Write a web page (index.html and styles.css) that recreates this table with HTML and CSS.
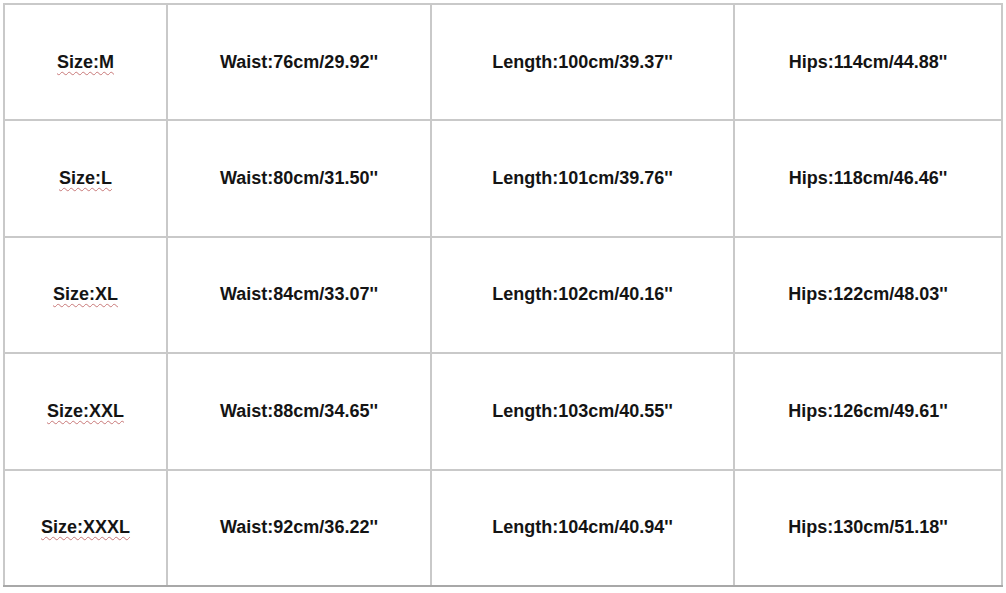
FILE: index.html
```html
<!DOCTYPE html>
<html>
<head>
<meta charset="utf-8">
<link rel="stylesheet" href="styles.css">
</head>
<body>
<table class="sizes">
  <colgroup>
    <col class="c1"><col class="c2"><col class="c3"><col class="c4">
  </colgroup>
  <tr>
    <td><span class="sz">Size:M</span></td>
    <td>Waist:76cm/29.92''</td>
    <td>Length:100cm/39.37''</td>
    <td>Hips:114cm/44.88''</td>
  </tr>
  <tr>
    <td><span class="sz">Size:L</span></td>
    <td>Waist:80cm/31.50''</td>
    <td>Length:101cm/39.76''</td>
    <td>Hips:118cm/46.46''</td>
  </tr>
  <tr>
    <td><span class="sz">Size:XL</span></td>
    <td>Waist:84cm/33.07''</td>
    <td>Length:102cm/40.16''</td>
    <td>Hips:122cm/48.03''</td>
  </tr>
  <tr>
    <td><span class="sz">Size:XXL</span></td>
    <td>Waist:88cm/34.65''</td>
    <td>Length:103cm/40.55''</td>
    <td>Hips:126cm/49.61''</td>
  </tr>
  <tr>
    <td><span class="sz">Size:XXXL</span></td>
    <td>Waist:92cm/36.22''</td>
    <td>Length:104cm/40.94''</td>
    <td>Hips:130cm/51.18''</td>
  </tr>
</table>
</body>
</html>
```
FILE: styles.css
```css
html, body {
  margin: 0;
  padding: 0;
  background: #ffffff;
}
body {
  padding: 3px 0 0 3px;
  font-family: "Liberation Sans", Arial, sans-serif;
}
.sizes {
  border-collapse: collapse;
  table-layout: fixed;
  width: 998px;
}
.c1 { width: 163px; }
.c2 { width: 264px; }
.c3 { width: 303px; }
.c4 { width: 268px; }
.sizes td {
  border: 2px solid #c9c9c9;
  height: 114.4px;
  padding: 0;
  text-align: center;
  vertical-align: middle;
  font-size: 18px;
  font-weight: bold;
  color: #141414;
}
.sizes tr:last-child td {
  border-bottom-color: #a8a8a8;
}
.sz {
  text-decoration: underline wavy #c87878;
  text-decoration-thickness: 1px;
  text-underline-offset: 3px;
}
```
